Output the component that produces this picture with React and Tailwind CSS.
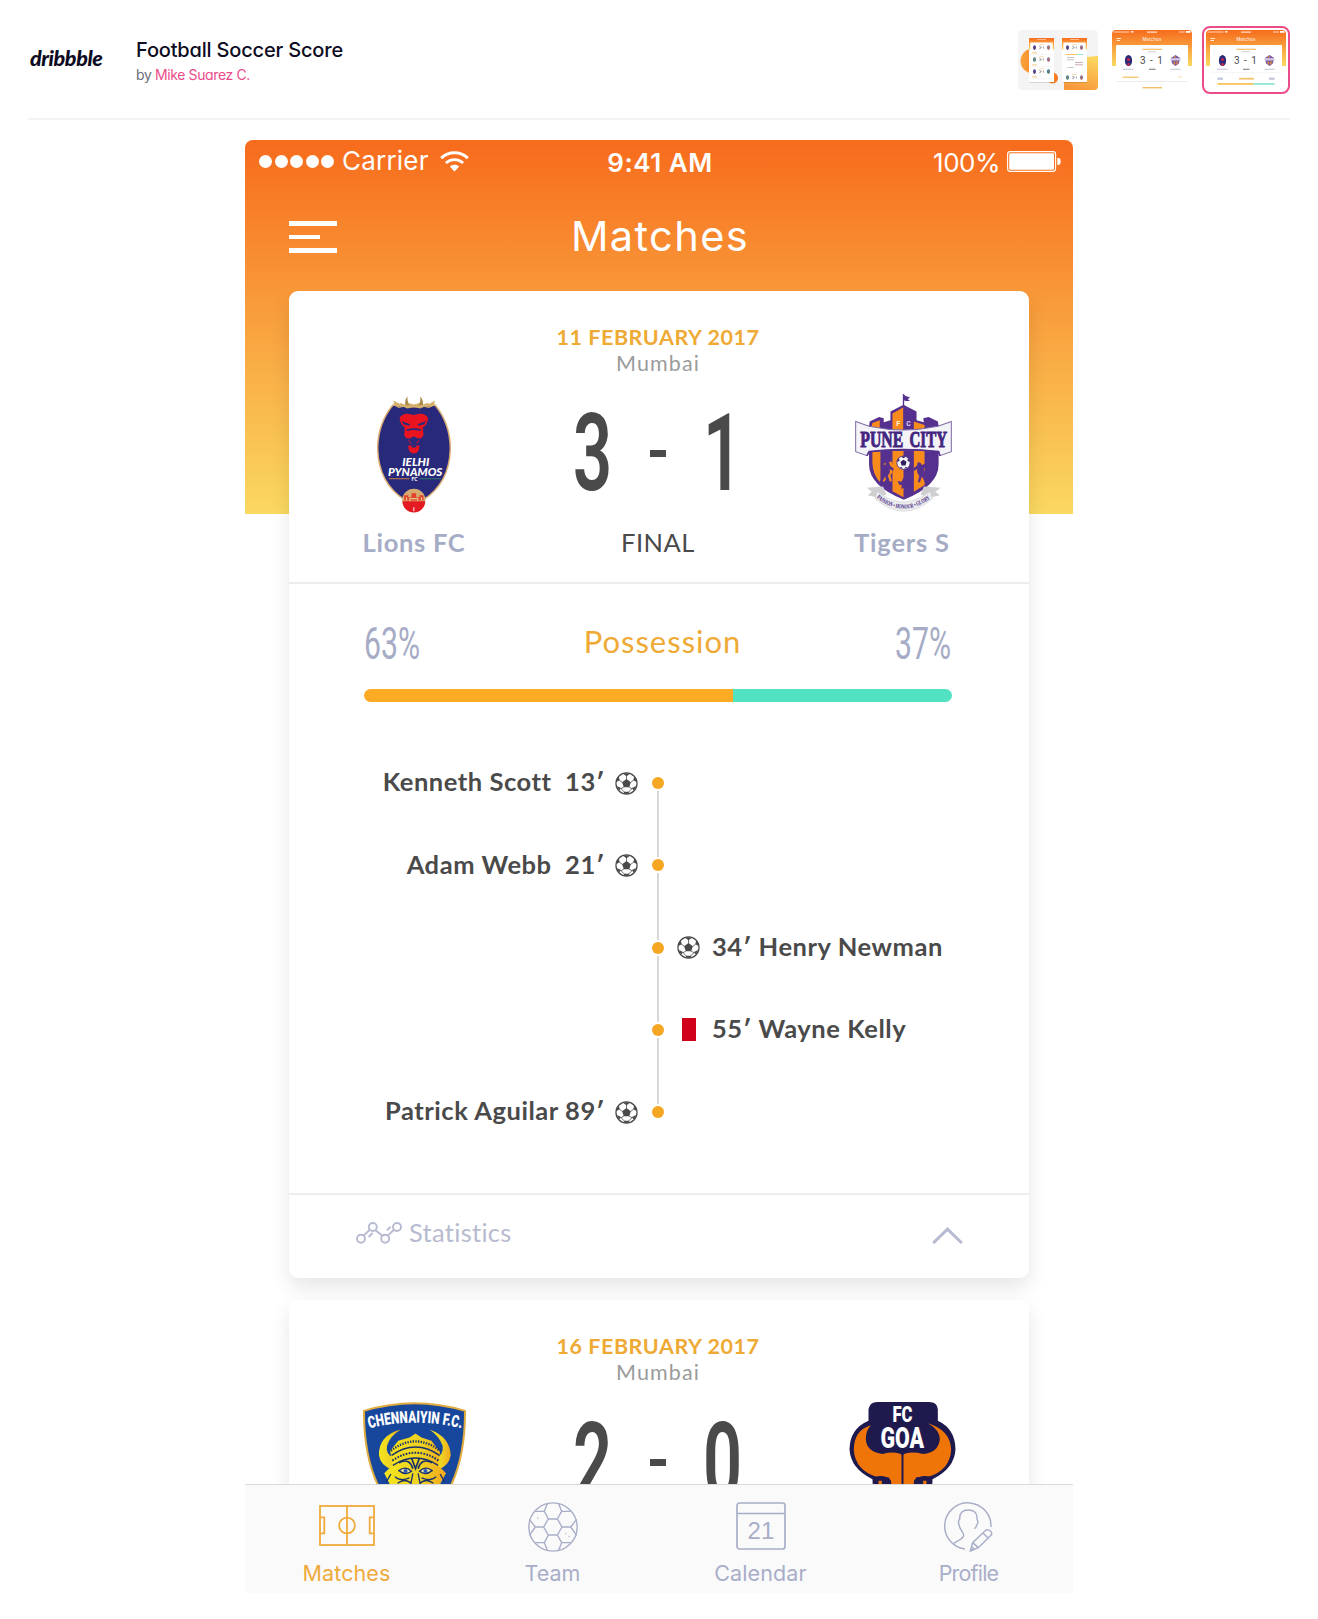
import React from "react";

/* ---------- Thumbnails ---------- */

function MiniBadge({ x, y, s = 1, c1, c2 }) {
  return (
    <g transform={`translate(${x} ${y}) scale(${s})`}>
      <ellipse cx="0" cy="0" rx="3.6" ry="5.6" fill={c1} />
      <circle cx="0" cy="-1" r="1.6" fill={c2} />
      <circle cx="0" cy="4" r="1.4" fill={c2} />
    </g>
  );
}

function MiniPhone({ x, expanded }) {
  return (
    <g transform={`translate(${x} 8)`}>
      <rect x="0.5" y="1" width="24.5" height="44" fill="#000" opacity="0.12" />
      <rect width="25" height="44" fill="#fff" />
      <rect width="25" height="11.5" fill="url(#thumbGrad)" />
      <rect x="1.3" y="4.5" width="22.4" height="37" fill="#fff" />
      <rect x="8" y="1.2" width="9" height="0.8" fill="#fff" opacity="0.6" />
      {(expanded ? [9.5, 39.5] : [9.5, 21.5, 33.5]).map((y, i) => (
        <g key={y}>
          <rect x="10" y={y - 3.4} width="5" height="0.6" fill="#f6cf92" />
          <MiniBadge x={5.5} y={y} s={0.42} c1={i === 1 ? "#4a7590" : "#4c4b9a"} c2={i === 1 ? "#9fb53a" : "#8a2860"} />
          <MiniBadge x={19.5} y={y} s={0.42} c1={i === 2 ? "#247a94" : "#8a6a94"} c2="#d07a3a" />
          <path d={`M10.2 ${y - 1.2}h1.2v2.4h-1.2M12.2 ${y}h0.8M14.4 ${y - 1.2}v2.4`} fill="none" stroke="#777" strokeWidth="0.6" />
          {!expanded && <rect x="3" y={y + 5} width="5" height="0.8" fill="#f4bd63" />}
          {!expanded && <rect x="1.3" y={y + 6.6} width="22.4" height="0.5" fill="#ececec" />}
        </g>
      ))}
      {expanded && (
        <g>
          <rect x="3.5" y="16" width="11.5" height="1" fill="#fbc25c" />
          <rect x="15" y="16" width="6.5" height="1" fill="#8fe8d2" />
          {[19, 21.5].map((y) => <rect key={y} x="5" y={y} width="7" height="0.7" fill="#aaa" />)}
          {[24, 26.5].map((y) => <rect key={y} x="13" y={y} width="8" height="0.7" fill="#b89" />)}
          <rect x="5" y="29" width="7" height="0.7" fill="#bbb" />
        </g>
      )}
    </g>
  );
}

function ThumbOverview() {
  return (
    <svg viewBox="0 0 80 60" className="block h-[60px] w-20 rounded">
      <defs>
        <linearGradient id="thumbGrad" x1="0" y1="0" x2="0" y2="1">
          <stop offset="0" stopColor="#f76b1c" />
          <stop offset="1" stopColor="#fad961" />
        </linearGradient>
        <linearGradient id="thumbSide" x1="0" y1="0" x2="1" y2="0">
          <stop offset="0" stopColor="#f9a53c" />
          <stop offset="1" stopColor="#f7701f" />
        </linearGradient>
        <linearGradient id="thumbCorner" x1="0.6" y1="0" x2="0.3" y2="1">
          <stop offset="0" stopColor="#fbd45c" />
          <stop offset="1" stopColor="#f8973a" />
        </linearGradient>
      </defs>
      <rect width="80" height="60" fill="#f4f4f5" />
      <circle cx="15" cy="31" r="12.5" fill="url(#thumbSide)" />
      <circle cx="34.5" cy="48" r="5.5" fill="url(#thumbSide)" />
      <path d="M46 60V40C50 30 62 27 80 26V60Z" fill="url(#thumbCorner)" />
      <MiniPhone x={11} />
      <MiniPhone x={44} expanded />
    </svg>
  );
}

function ThumbScreen({ expanded }) {
  return (
    <svg viewBox="0 0 80 60" className="block h-[60px] w-20 rounded">
      <rect width="80" height="60" fill="#fff" />
      <rect width="80" height="36" fill="url(#thumbGrad)" />
      <g fill="#fff">
        <rect x="1.5" y="1.5" width="16" height="1" opacity="0.7" />
        <rect x="19" y="1" width="2.5" height="1.6" opacity="0.8" />
        <rect x="35" y="1.5" width="10" height="1.2" opacity="0.8" />
        <rect x="67" y="1.5" width="6" height="1" opacity="0.7" />
        <rect x="74" y="1" width="4.5" height="1.8" />
        <rect x="4.5" y="8" width="4.5" height="0.8" />
        <rect x="4.5" y="10" width="3.5" height="0.8" />
      </g>
      <text x="40" y="11.2" textAnchor="middle" fontSize="4.4" letterSpacing="0.2" fontFamily="Inter, sans-serif" fill="#fff">Matches</text>
      <rect x="4" y="15" width="72" height={expanded ? 46 : 37} rx="1" fill="#fff" />
      {!expanded && <rect x="4.5" y="51" width="71" height="1" fill="#ececec" />}
      <rect x="30.5" y="18.7" width="19.5" height="1.2" fill="#f4bd63" />
      <rect x="36" y="21.2" width="8" height="0.9" fill="#ccc" />
      <MiniBadge x={16.5} y={30.5} c1="#2a2a7a" c2="#c2264a" />
      <g transform="translate(63.5 30.5)">
        <path d="M-4.6 -2.6L0 -5.6L4.6 -2.6L3.4 3L0 5.4L-3.4 3Z" fill="#7a5aa4" />
        <path d="M-1.8 1H-0.4V4H-1.8ZM0.8 1H2.2V4H0.8ZM-1.5 -4.4H0V-3H-1.5Z" fill="#e98a3a" />
        <rect x="-5" y="-2.4" width="10" height="2.4" fill="#cfc6dd" />
      </g>
      <text x="40" y="33.6" textAnchor="middle" fontSize="10" letterSpacing="1" fontFamily="Roboto, sans-serif" fill="#4a4a4a">3 - 1</text>
      <rect x="11" y="38.7" width="10.5" height="1.2" fill="#c9cddd" />
      <rect x="37" y="38.7" width="6.5" height="1.2" fill="#8a8a8a" />
      <rect x="58.5" y="38.7" width="10" height="1.2" fill="#c9cddd" />
      {expanded ? (
        <g>
          <rect x="4" y="42.6" width="72" height="0.5" fill="#ececec" />
          <rect x="11.5" y="47.5" width="5.5" height="2.4" fill="#c3c8da" />
          <rect x="33" y="47.8" width="15" height="1.8" fill="#f6c26e" />
          <rect x="63" y="47.5" width="5.5" height="2.4" fill="#c3c8da" />
          <rect x="11.5" y="53" width="36" height="1.8" fill="#fbc25c" />
          <rect x="47.5" y="53" width="21" height="1.8" fill="#8fe8d2" />
        </g>
      ) : (
        <g>
          <rect x="10.5" y="46.6" width="16" height="1.2" fill="#f4bd63" />
          <path d="M66.5 46.2l1.5 1.5 1.5-1.5" fill="none" stroke="#f4bd63" strokeWidth="0.7" />
          <rect x="30.5" y="57" width="19.5" height="1.4" fill="#f4bd63" />
        </g>
      )}
    </svg>
  );
}

/* ---------- Icons ---------- */

function WifiIcon() {
  return (
    <svg viewBox="0 0 29 21" className="h-[21px] w-[29px]" fill="none" stroke="#fff">
      <path d="M1.2 7.2C8.6 0 20.4 0 27.8 7.2" strokeWidth="3" />
      <path d="M5.9 12C10.7 7.4 18.3 7.4 23.1 12" strokeWidth="2.8" />
      <path d="M14.5 20.4L9.8 15.6C12.4 13.2 16.6 13.2 19.2 15.6Z" fill="#fff" stroke="none" />
    </svg>
  );
}

function BatteryIcon() {
  return (
    <svg viewBox="0 0 54 21" className="h-[21px] w-[54px]">
      <rect x="0.6" y="0.6" width="48" height="19.8" rx="2.6" fill="none" stroke="#fff" strokeWidth="1.1" />
      <rect x="2.2" y="2.2" width="44.8" height="16.6" rx="1.4" fill="#fff" />
      <path d="M50.3 7h1.6q1.8.4 1.8 3.5t-1.8 3.5h-1.6z" fill="#fff" />
    </svg>
  );
}

function SoccerBall() {
  return (
    <svg viewBox="0 0 24 24" className="size-[23px] shrink-0">
      <circle cx="12" cy="12" r="11" fill="#fff" stroke="#4a4a4a" strokeWidth="1.3" />
      <g fill="#4a4a4a">
        <path d="M12 7.3l4.6 3.3-1.8 5.4H9.2L7.4 10.6z" />
        <path d="M8.3 1.9Q12 .6 15.7 1.9L12 4.4z" />
        <path d="M1 10.8Q1.5 6.9 3.9 4.4L4.9 8.6z" />
        <path d="M23 10.8Q22.5 6.9 20.1 4.4L19.1 8.6z" />
        <path d="M4.5 19.2Q2.6 17.2 1.9 14.6L6.3 16.8z" />
        <path d="M19.5 19.2Q21.4 17.2 22.1 14.6L17.7 16.8z" />
        <path d="M8.6 22.4L9.6 20.6H14.4L15.4 22.4Q12 23.4 8.6 22.4z" />
      </g>
      <path d="M12 4v4M7.6 10.8L4.4 8.4M16.4 10.8L19.6 8.4M9.4 15.6L6 17.6M14.6 15.6L18 17.6M6 17L9.8 21M18 17L14.2 21" stroke="#4a4a4a" strokeWidth="0.8" fill="none" />
    </svg>
  );
}

function StatsIcon() {
  return (
    <svg viewBox="0 0 46 22" className="h-[22px] w-[46px]" fill="none" stroke="#b7bbd2" strokeWidth="1.9">
      <circle cx="5" cy="16.8" r="4" />
      <circle cx="16.8" cy="5" r="4" />
      <circle cx="29.2" cy="16.8" r="4" />
      <circle cx="41" cy="5" r="4" />
      <path d="M7.6 13.6L13.8 7.8M19.4 8.2L26.4 13.8M31.8 13.6L38 7.8M12.6 15l4-4M31 8.4l3.6-3.8" />
    </svg>
  );
}

function PitchIcon() {
  return (
    <svg viewBox="0 0 56 41" className="-mt-[3px] h-[41px] w-[56px]" fill="none" stroke="#eeaa3b" strokeWidth="1.8">
      <rect x="1" y="1" width="54" height="39" />
      <path d="M28 1v39M1 12.3h4.3v16H1M55 12.3h-4.3v16H55" />
      <circle cx="28" cy="20.5" r="7.9" />
    </svg>
  );
}

function HexBallIcon() {
  return (
    <svg viewBox="0 0 150 150" className="size-[50px]" fill="none" stroke="#a9aec8" strokeWidth="4.2">
      <circle cx="75" cy="75" r="72.5" />
      <path d="M47 75L61 51H88L102 75L88 99H61ZM61 51L49 28L58 5M88 51L101 28L92 5M49 28H22M101 28H128M47 75H22L4 52M22 75L4 100M102 75H128L146 52M128 75L146 100M61 99L49 122L58 145M88 99L101 122L92 145M49 122H22M101 122H128" />
      <path d="M27 48h4M112 95h4M121 103h4" strokeWidth="3" />
    </svg>
  );
}

function CalendarIcon() {
  return (
    <svg viewBox="0 0 50 48" className="-mt-[2px] h-[48px] w-[50px]">
      <rect x="1" y="1" width="48" height="46" rx="2.5" fill="none" stroke="#a9aec8" strokeWidth="1.7" />
      <path d="M1 11.5h48" stroke="#a9aec8" strokeWidth="1.7" />
      <text x="25" y="37.3" textAnchor="middle" fontSize="24" fontFamily="Liberation Sans, sans-serif" fill="#a9aec8">21</text>
    </svg>
  );
}

function ProfileIcon() {
  return (
    <svg viewBox="0 0 150 150" className="size-[50px]" fill="none" stroke="#a9aec8" strokeWidth="4.4">
      <path d="M63 141A69.5 69.5 0 1 1 141 75" />
      <path d="M30 124C45 114 58 110 59 100C60 92 46 82 45 68Q41 58 47 52C46 32 56 24 72 24C90 24 101 32 99 52Q105 60 98 70Q96 78 91 80" />
      <path d="M79 147L86 122L126 84Q132 81 139 87Q146 93 141 100L103 137ZM86 122L103 137M117 93L132 108M79 147L90 141L83 134" />
    </svg>
  );
}

/* ---------- Crests ---------- */

function LionsCrest() {
  return (
    <svg viewBox="0 0 223 355" className="mt-[3px] h-[118px] w-[74px]">
      <g fill="#d3b26b">
        <path d="M52 36L50 16L68 26L72 24L82 28L94 24L111 28L128 24L140 28L150 24L158 26L174 16L172 36Z" />
        <path d="M99 32Q90 20 92 4Q82 14 86 30ZM124 32Q133 20 130 4Q141 14 138 30Z" fill="#a88a4a" />
      </g>
      <path d="M48 30Q3 85 2 160Q4 265 84 316H139Q219 265 221 160Q220 85 175 30Q111 40 48 30Z" fill="#29297b" stroke="#dcae74" strokeWidth="4.5" />
      <path d="M54 30L66 37L80 33L92 38L111 34L130 38L142 33L156 37L170 30" stroke="#d3b26b" strokeWidth="4" fill="none" />
      <g fill="#ea1420">
        <path d="M68 70Q74 56 92 56L111 60L130 56Q148 56 154 70Q152 90 138 98L140 122Q134 134 122 130L111 124L100 130Q88 134 82 122L84 98Q70 90 68 70Z" />
        <path d="M94 152H128Q128 176 111 176Q94 176 94 152Z" />
        <path d="M96 136l6 10M126 136l-6 10" stroke="#ea1420" strokeWidth="3" />
      </g>
      <path d="M74 78L100 88L96 92L80 88ZM148 78L122 88L126 92L142 88ZM88 104Q111 96 134 104L130 108Q111 102 92 108ZM96 118l8 2M118 120l8-2M104 152h14v6h-14Z" fill="#29297b" />
      <g fill="#fff" fontFamily="Lato, sans-serif" fontWeight="900" fontStyle="italic" textAnchor="middle">
        <text x="117" y="213" fontSize="32" textLength="82" lengthAdjust="spacingAndGlyphs">IELHI</text>
        <text x="115" y="243" fontSize="34" textLength="164" lengthAdjust="spacingAndGlyphs">PYNAMOS</text>
        <text x="113" y="259" fontSize="15" fontStyle="normal">FC</text>
      </g>
      <path d="M36 252H98" stroke="#c77a46" strokeWidth="3" />
      <path d="M128 252H192" stroke="#2b7a66" strokeWidth="3" />
      <circle cx="111" cy="317" r="35" fill="#d5ab70" />
      <path d="M77 320A34 34 0 0 0 145 320Z" fill="#e41b23" />
      <path d="M82 318V302H94V308H104V296H118V308H128V302H140V318Z" fill="#e2432c" />
      <path d="M89 318V308M99 320V312H123V320M134 318V308" stroke="#e8c58c" strokeWidth="3.5" fill="none" />
      <path d="M111 350V338" stroke="#fff" strokeWidth="3" />
    </svg>
  );
}

function Horse() {
  return (
    <path d="M30 2Q22 0 18 10L8 6L4 14L13 20Q6 34 10 44L2 60L8 62L18 44L24 62L30 60L26 42Q34 34 32 22L42 28L44 20L33 12Z" />
  );
}

function TigersCrest() {
  return (
    <svg viewBox="0 0 290 352" className="mt-[2px] h-[118px] w-[97px]">
      <path d="M145 0V34" stroke="#55308f" strokeWidth="4" />
      <path d="M146 2Q154 10 165 8L158 15L164 20Q154 22 146 18Z" fill="#55308f" />
      <path d="M42 96L44 82L72 68L86 72V84L106 78V52L145 32L184 52V78L206 84L204 72L220 68L248 82L250 96V210Q250 275 146 316Q42 275 42 210Z" fill="#55308f" />
      <path d="M50 94L52 86L74 78V110H50ZM112 58L144 40V110H112ZM176 82L208 92V110H176Z" fill="#f98a1c" />
      <path d="M52 170H76V264Q54 244 52 206ZM112 170H145V308L112 290ZM176 170H208V272L176 292Z" fill="#f98a1c" />
      <g fontFamily="Roboto, sans-serif" fontWeight="700" fontSize="24" textAnchor="middle">
        <text x="129" y="94" fill="#fff3e0" textLength="12" lengthAdjust="spacingAndGlyphs">F</text>
        <text x="160" y="94" fill="#e7def2" textLength="13" lengthAdjust="spacingAndGlyphs">C</text>
      </g>
      <path d="M2 82L42 96Q145 118 248 96L288 82V172L254 184L250 172Q145 160 42 172L36 184L2 172Z" fill="#f4f3f7" stroke="#7d6aa5" strokeWidth="3" />
      <path d="M36 184L42 172Q145 160 250 172L254 184" fill="none" stroke="#55308f" strokeWidth="5" />
      <g fontFamily="Liberation Serif, serif" fontWeight="700" fill="#43257f" stroke="#43257f" strokeWidth="3" fontSize="72">
        <text x="16" y="159" textLength="128" lengthAdjust="spacingAndGlyphs">PUNE</text>
        <text x="163" y="159" textLength="112" lengthAdjust="spacingAndGlyphs">CITY</text>
      </g>
      <circle cx="145" cy="205" r="20" fill="#f7f5fa" stroke="#43257f" strokeWidth="2.5" />
      <path d="M145 196L154 202L151 213H139L136 202ZM138 187Q145 184 152 187L145 192ZM126 204Q127 195 132 192L133 199ZM164 204Q163 195 158 192L157 199ZM134 220L138 217L143 223ZM156 220L152 217L147 223Z" fill="#31205f" />
      <g fill="#f98a1c" transform="translate(80 200)"><Horse /></g>
      <g fill="#55308f" transform="translate(72 202)"><Horse /></g>
      <g fill="#55308f" transform="translate(218 202) scale(-1 1)"><Horse /></g>
      <path d="M145 250L151 262L163 260L157 272L150 272L152 284L145 280L138 284L140 272L133 272L127 260L139 262Z" fill="#55308f" />
      <path d="M36 280L84 276L94 300L70 310L38 302L50 292ZM256 280L206 276L196 300L220 310L254 302L240 292Z" fill="#cfcfd2" />
      <path d="M66 290Q145 355 224 290L232 312Q145 388 60 312Z" fill="#ececef" stroke="#c6c6ca" strokeWidth="1.5" />
      <defs><path id="mottoArc" d="M64 310Q145 375 228 310" /></defs>
      <text fontFamily="Liberation Serif, serif" fontWeight="700" fontSize="19" fill="#43257f">
        <textPath href="#mottoArc" textLength="176" lengthAdjust="spacingAndGlyphs">PASSION • HONOUR • GLORY</textPath>
      </text>
    </svg>
  );
}

function ChennaiyinCrest() {
  return (
    <svg viewBox="0 0 310 366" className="mt-[1px] h-[122px] w-[103px]">
      <defs>
        <linearGradient id="maskGold" x1="0" y1="0" x2="1" y2="0">
          <stop offset="0" stopColor="#f4e51e" />
          <stop offset="0.6" stopColor="#eed022" />
          <stop offset="1" stopColor="#f3a81c" />
        </linearGradient>
        <path id="clubArc" d="M19 79Q155 44 296 79" />
      </defs>
      <path d="M3 26Q155 -20 307 26Q308 160 264 252Q230 320 155 360Q80 320 46 252Q2 160 3 26Z" fill="#17479c" stroke="#e0ac3e" strokeWidth="6" />
      <text fontFamily="Roboto, sans-serif" fontWeight="900" fontSize="50" fill="#fff">
        <textPath href="#clubArc" textLength="280" lengthAdjust="spacingAndGlyphs">CHENNAIYIN F.C.</textPath>
      </text>
      <g fill="url(#maskGold)">
        <path d="M114 82Q46 100 48 160Q52 190 88 204L92 166Q68 160 72 132Q80 102 114 82Z" />
        <path d="M200 82Q262 104 264 160Q260 190 226 204L222 166Q242 160 240 132Q230 102 200 82Z" />
        <path d="M158 94L176 106L206 116L232 150L226 190L250 214L230 250L200 330H112L82 250L64 214L88 190L82 146L106 116L140 106Z" />
      </g>
      <g fill="none" stroke="#17306b" strokeWidth="4">
        <path d="M84 146Q158 90 232 146" strokeDasharray="4 4" strokeWidth="7" />
        <path d="M86 160Q158 110 230 160" />
        <path d="M88 176Q158 128 228 176" strokeDasharray="5 4" strokeWidth="6" />
        <path d="M90 190Q158 146 226 190" />
        <path d="M108 182Q140 166 150 200M208 182Q176 166 166 200M146 168L158 200L170 168" strokeWidth="5" />
        <path d="M108 206Q128 190 146 208Q128 222 108 206ZM170 208Q188 190 208 206Q188 222 170 208Z" fill="#e9e2a0" />
        <path d="M84 216L70 240M232 216L246 240M96 224Q112 240 140 228M220 224Q204 240 176 228M104 244Q128 226 146 246M212 244Q188 226 170 246M150 214L144 246M166 214L172 246" />
      </g>
      <circle cx="128" cy="207" r="6" fill="#2c58b4" />
      <circle cx="188" cy="207" r="6" fill="#2c58b4" />
    </svg>
  );
}

function GoaCrest() {
  return (
    <svg viewBox="0 0 320 366" className="mt-[1px] mr-[3px] h-[122px] w-[107px]">
      <path d="M58 22Q62 0 84 0H240Q264 0 266 22V56Q318 80 319 142Q316 200 250 232L246 330H74L70 232Q4 200 1 142Q2 80 58 56Z" fill="#1e1a4e" />
      <path d="M66 70Q14 84 14 144Q18 206 86 226H118L128 240H192L202 226H234Q302 206 306 144Q304 84 236 64Q272 84 272 112Q268 152 222 156Q176 146 160 160Q142 146 100 156Q52 150 50 112Q50 84 66 70Z" fill="#ef7509" />
      <path d="M126 232H194V330H126Z" fill="#ef7509" />
      <path d="M160 156V330" stroke="#1e1a4e" strokeWidth="6" />
      <path d="M76 230Q118 218 122 250M248 230Q202 218 198 250" fill="none" stroke="#1e1a4e" strokeWidth="9" />
      <path d="M88 236H98V260H88ZM222 236H232V260H222Z" fill="#ef7509" />
      <g fontFamily="Roboto, sans-serif" fontWeight="900" fill="#fff">
        <text x="130" y="61" fontSize="64" textLength="60" lengthAdjust="spacingAndGlyphs">FC</text>
        <text x="94" y="137" fontSize="88" textLength="131" lengthAdjust="spacingAndGlyphs">GOA</text>
      </g>
    </svg>
  );
}

/* ---------- Match cards ---------- */

function ScoreDigit({ children }) {
  return (
    <span className="flex w-[65px] justify-center">
      <span className="inline-block scale-x-[0.64]">{children}</span>
    </span>
  );
}

function MatchSummary({ date, home, away, score }) {
  return (
    <div className="h-[291px] pr-[5px] pl-[3px] pt-[33px] text-center font-['Lato',sans-serif]">
      <div className="text-[21.5px] leading-[26px] font-bold tracking-[0.55px] text-[#eeaa35]">{date}</div>
      <div className="text-[21.5px] leading-[26px] tracking-[1.1px] text-[#9b9b9b]">Mumbai</div>
      <div className="mt-4 grid grid-cols-3">
        <div className="flex h-[122px] justify-center">{home.crest}</div>
        <div className="flex h-[122px] items-center justify-center font-['Roboto',sans-serif] text-[107px] leading-none font-semibold text-[#4a4a4a]">
          <ScoreDigit>{score[0]}</ScoreDigit>
          <span className="flex w-[65px] justify-center">
            <span className="h-[7px] w-4 bg-[#4a4a4a]" />
          </span>
          <ScoreDigit>{score[1]}</ScoreDigit>
        </div>
        <div className="flex h-[122px] justify-center pl-[3px]">{away.crest}</div>
        <div className="flex h-[58px] items-center justify-center text-[25.5px] leading-none font-bold tracking-[0.7px] text-[#a6acc6]">{home.name}</div>
        <div className="flex h-[58px] items-center justify-center text-[25.5px] leading-none tracking-[0.5px] text-[#4a4a4a]">FINAL</div>
        <div className="flex h-[58px] items-center justify-center text-[25.5px] leading-none font-bold tracking-[0.8px] text-[#a6acc6]">{away.name}</div>
      </div>
    </div>
  );
}

const EVENTS = [
  { side: "home", text: "Kenneth Scott  13′" },
  { side: "home", text: "Adam Webb  21′" },
  { side: "away", text: "34′ Henry Newman" },
  { side: "away", text: "55′ Wayne Kelly", card: true },
  { side: "home", text: "Patrick Aguilar 89′" },
];

function TimelineRow({ event, first, last }) {
  const icon = event.card ? (
    <span className="flex w-[23px] justify-center"><span className="h-[23px] w-[14px] bg-[#d0021b]" /></span>
  ) : (
    <SoccerBall />
  );
  const label = <span className="-mt-[2px] whitespace-pre">{event.text}</span>;
  return (
    <div className="grid h-[82.25px] grid-cols-[1fr_24px_1fr] items-center pr-[2px]">
      <div className="flex items-center justify-end gap-[10px] pr-2">
        {event.side === "home" && <>{label}{icon}</>}
      </div>
      <div className="flex h-full flex-col items-center gap-[2px]">
        <span className={first ? "w-[2px] flex-1" : "w-[2px] flex-1 bg-[#d8d8d8]"} />
        <span className="size-3 rounded-full bg-[#f5a623]" />
        <span className={last ? "w-[2px] flex-1" : "w-[2px] flex-1 bg-[#d8d8d8]"} />
      </div>
      <div className="flex items-center gap-3 pl-[7px]">
        {event.side === "away" && <>{icon}{label}</>}
      </div>
    </div>
  );
}

function MatchDetails() {
  return (
    <>
      <section className="h-[613px] border-y-2 border-[#ededed] pt-[37px] font-['Lato',sans-serif]">
        <div className="flex h-10 items-center justify-between pr-[77px] pl-[75px] leading-none">
          <span className="w-[56px] pt-[4px] font-['Roboto',sans-serif] text-[45px] text-[#a6acc6]">
            <span className="inline-block origin-left scale-x-[0.67]">63%</span>
          </span>
          <span className="ml-[10px] text-[31px] tracking-[1px] text-[#eeaa35]">Possession</span>
          <span className="w-[57px] pt-[4px] font-['Roboto',sans-serif] text-[45px] text-[#a6acc6]">
            <span className="inline-block origin-left scale-x-[0.67]">37%</span>
          </span>
        </div>
        <div className="mt-7 mr-[77px] ml-[75px] flex h-[13px] overflow-hidden rounded-full">
          <div className="w-[369px] bg-[#fdab24]" />
          <div className="flex-1 bg-[#51e3c1]" />
        </div>
        <div className="mt-10 text-[25.5px] leading-none font-bold tracking-[0.55px] text-[#4a4a4a]">
          {EVENTS.map((event, i) => (
            <TimelineRow key={event.text} event={event} first={i === 0} last={i === EVENTS.length - 1} />
          ))}
        </div>
      </section>
      <footer className="flex h-[83px] items-center pr-[66px] pb-[7px] pl-[67px] font-['Lato',sans-serif] text-[25.5px] leading-none text-[#b7bbd0]">
        <StatsIcon />
        <span className="ml-[7px] tracking-[0.3px]">Statistics</span>
        <svg viewBox="0 0 31 17" className="mt-[5px] ml-auto h-[17px] w-[31px]" fill="none" stroke="#b7bbd2" strokeWidth="3">
          <path d="M1.2 16L15.5 2.2L29.8 16" />
        </svg>
      </footer>
    </>
  );
}

function Card({ children }) {
  return <article className="shrink-0 rounded-[9px] bg-white shadow-[0_9px_20px_rgba(0,0,0,0.1)]">{children}</article>;
}

const TABS = [
  { label: "Matches", icon: <PitchIcon />, box: "ml-[44px] tracking-[0.1px]", color: "text-[#eeaa3b]" },
  { label: "Team", icon: <HexBallIcon />, box: "ml-[91px]", color: "text-[#a9aec8]" },
  { label: "Calendar", icon: <CalendarIcon />, box: "ml-[93px] tracking-[0.1px]", color: "text-[#a9aec8]" },
  { label: "Profile", icon: <ProfileIcon />, box: "ml-[93px] tracking-[-0.8px]", color: "text-[#a9aec8]" },
];

export default function App() {
  return (
    <div className="h-[1619px] overflow-hidden bg-white font-['Inter',sans-serif]">
      <header className="mx-7 flex h-[120px] items-start border-b-2 border-[#f3f3f4]">
        <div className="mt-[48px] ml-[2px] w-[106px] font-['Lato',sans-serif] text-[21.5px] leading-none font-black tracking-[-0.4px] text-[#0d0c22] italic">dribbble</div>
        <div className="mt-[38px] font-['Inter',sans-serif] [font-feature-settings:'cv11']">
          <h1 className="text-[20px] leading-6 font-medium tracking-[-0.18px] text-[#0d0c22]">Football Soccer Score</h1>
          <p className="mt-[3px] text-[14px] leading-5 tracking-[-0.38px] text-[#6e6d7a]">
            by <span className="text-[#ea4c89]">Mike Suarez C.</span>
          </p>
        </div>
        <div className="mt-[26px] ml-auto flex items-center gap-[10px]">
          <div className="p-1 pr-0"><ThumbOverview /></div>
          <div className="p-1 pr-0"><ThumbScreen /></div>
          <div className="rounded-lg border-2 border-[#ea4c89] p-[2px]"><ThumbScreen expanded /></div>
        </div>
      </header>

      <main className="mx-auto mt-5 flex h-[1453px] w-[828px] flex-col overflow-hidden rounded-t-lg bg-[linear-gradient(#f76b1c,#fad961)] bg-[length:100%_374px] bg-no-repeat">
        <div className="grid h-[42px] shrink-0 grid-cols-[1fr_auto_1fr] items-center pr-3 pl-[14px] text-[26px] leading-none text-white">
          <div className="flex items-center">
            <span className="flex gap-[2.5px]">
              {[0, 1, 2, 3, 4].map((i) => <span key={i} className="size-[13px] rounded-full bg-white" />)}
            </span>
            <span className="mr-[11px] ml-[8px] font-normal tracking-[0.2px]">Carrier</span>
            <WifiIcon />
          </div>
          <div className="mt-[3px] font-semibold tracking-[0.5px]">9:41 AM</div>
          <div className="flex items-center justify-end gap-[7px]">
            <span className="mt-[3px] font-normal tracking-[-0.5px]">100%</span>
            <BatteryIcon />
          </div>
        </div>

        <div className="flex h-[109px] shrink-0 items-center px-11">
          <div className="flex h-8 w-12 flex-col justify-between">
            <span className="h-[5px] w-12 bg-white" />
            <span className="h-[4px] w-[31px] bg-white" />
            <span className="h-[5px] w-12 bg-white" />
          </div>
          <h2 className="flex-1 pr-[46px] text-center text-[41.5px] leading-none font-normal tracking-[1.4px] text-white">Matches</h2>
        </div>

        <div className="flex min-h-0 flex-1 flex-col gap-[22px] overflow-hidden px-11">
          <Card>
            <MatchSummary
              date="11 FEBRUARY 2017"
              home={{ name: "Lions FC", crest: <LionsCrest /> }}
              away={{ name: "Tigers S", crest: <TigersCrest /> }}
              score={["3", "1"]}
            />
            <MatchDetails />
          </Card>
          <Card>
            <MatchSummary
              date="16 FEBRUARY 2017"
              home={{ name: "Chennaiyin", crest: <ChennaiyinCrest /> }}
              away={{ name: "Goa", crest: <GoaCrest /> }}
              score={["2", "0"]}
            />
          </Card>
        </div>

        <nav className="flex h-[109px] shrink-0 border-t border-[#d9d9d9] bg-[#fafafb]">
          {TABS.map((tab) => (
            <div key={tab.label} className={`flex w-[115px] flex-col items-center ${tab.box} ${tab.color}`}>
              <span className="mt-[16px] flex h-[52px] items-center">{tab.icon}</span>
              <span className="mt-[10px] text-[21.5px] leading-none font-normal">{tab.label}</span>
            </div>
          ))}
        </nav>
      </main>
    </div>
  );
}
